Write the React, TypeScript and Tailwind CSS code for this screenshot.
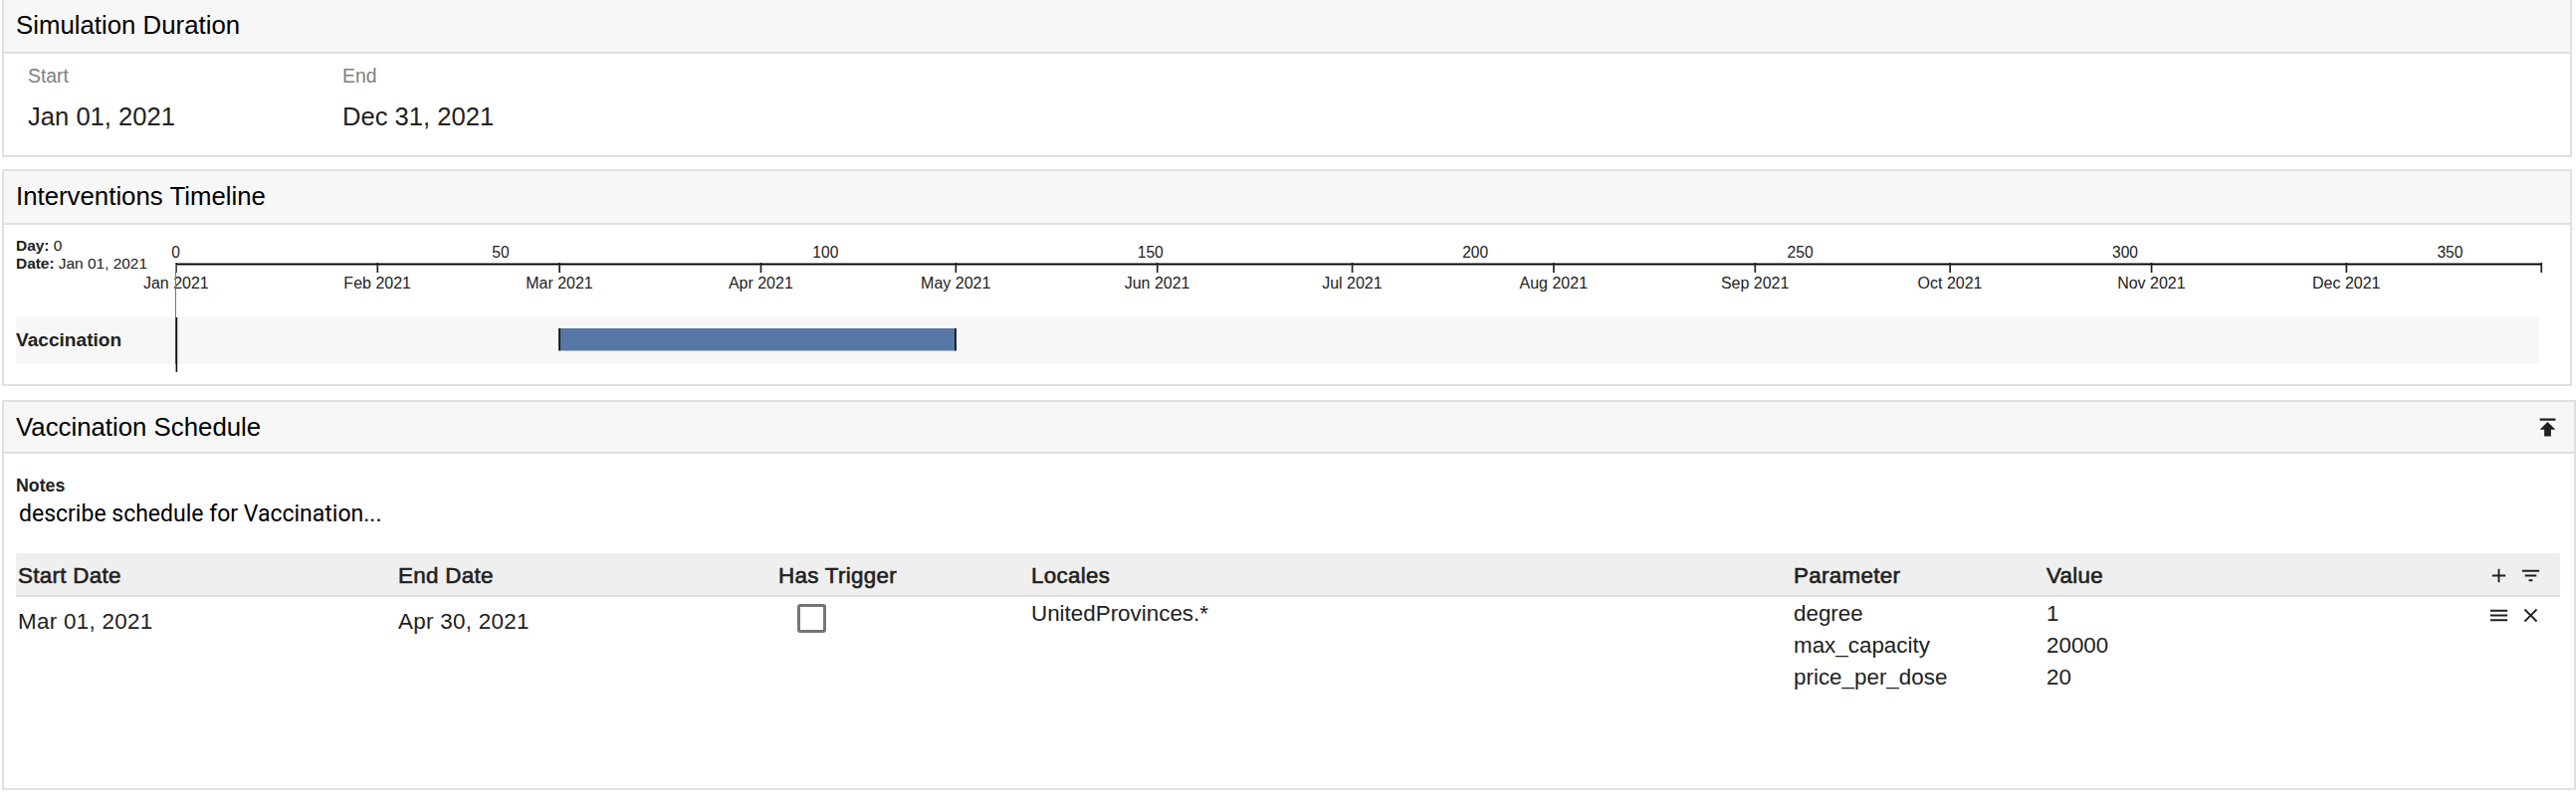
import React from "react";
import { MdAdd, MdClose, MdFilterList, MdMenu, MdPublish } from "react-icons/md";

const DAY = 6.5283;
const ORIGIN = 16.8;

const months = [
  { day: 0, label: "Jan 2021" },
  { day: 31, label: "Feb 2021" },
  { day: 59, label: "Mar 2021" },
  { day: 90, label: "Apr 2021" },
  { day: 120, label: "May 2021" },
  { day: 151, label: "Jun 2021" },
  { day: 181, label: "Jul 2021" },
  { day: 212, label: "Aug 2021" },
  { day: 243, label: "Sep 2021" },
  { day: 273, label: "Oct 2021" },
  { day: 304, label: "Nov 2021" },
  { day: 334, label: "Dec 2021" },
];
const days = [0, 50, 100, 150, 200, 250, 300, 350];
const params = [
  { name: "degree", value: "1" },
  { name: "max_capacity", value: "20000" },
  { name: "price_per_dose", value: "20" },
];
const columns = ["Start Date", "End Date", "Has Trigger", "Locales", "Parameter", "Value"];

const xOf = (day: number) => ORIGIN + day * DAY;

function Header({ title, children }: { title: string; children?: React.ReactNode }) {
  return (
    <header className="flex h-full items-center justify-between border-b-2 border-[#e0e0e0] bg-[#f7f7f7] pl-3 text-[25.8px] leading-[32px] text-black">
      {title && <h2 className={children ? "" : "pb-[2px]"}>{title}</h2>}
      {children}
    </header>
  );
}

function DateField({ label, value }: { label: string; value: string }) {
  return (
    <div className="w-[316px]">
      <div className="text-[19.4px] leading-6 text-[#808080]">{label}</div>
      <div className="mt-[13px] text-[25.6px] leading-8">{value}</div>
    </div>
  );
}

function Axis() {
  return (
    <svg width="2418" height="92" className="overflow-visible" fill="#222">
      <g fontSize="15.6" textAnchor="middle">
        {days.map((d) => (
          <text key={d} x={xOf(d) - 0.3} y="33.3">{d}</text>
        ))}
      </g>
      <g fontSize="16" textAnchor="middle">
        {months.map((m) => (
          <text key={m.day} x={xOf(m.day)} y="64">{m.label}</text>
        ))}
      </g>
      <g shapeRendering="crispEdges">
        <rect x="17" y="38" width="2377" height="3" fill="#8c8c8c" />
        <rect x="17" y="39" width="2377" height="1" fill="#000" />
      </g>
      {months.map((m) => (
        <rect key={m.day} x={xOf(m.day) - 0.7} y="38" width="1.7" height="10" />
      ))}
      <rect x={xOf(364) - 0.7} y="38" width="1.7" height="10" />
      <rect x="16" y="38" width="1" height="102" fill="#777" />
    </svg>
  );
}

export default function App() {
  return (
    <div className="flex h-[796px] w-[2588px] flex-col bg-white pl-[2px] font-['Liberation_Sans',Arial,sans-serif] text-[#212121]">
      <section className="grid h-[158px] w-[2582px] grid-rows-[54px_1fr] border-x-2 border-b-2 border-[#e0e0e0]">
        <Header title="Simulation Duration" />
        <div className="flex pl-6 pt-[10px]">
          <DateField label="Start" value="Jan 01, 2021" />
          <DateField label="End" value="Dec 31, 2021" />
        </div>
      </section>

      <section className="mt-3 grid h-[218px] w-[2582px] grid-rows-[54px_1fr] border-2 border-[#e0e0e0]">
        <Header title="Interventions Timeline" />
        <div className="pl-3">
          <div className="flex h-[92px]">
            <div className="w-36 whitespace-nowrap pt-3 text-[15.5px] leading-[18px] tracking-[-0.04px]">
              <div><b>Day:</b> 0</div>
              <div><b>Date:</b> Jan 01, 2021</div>
            </div>
            <Axis />
          </div>
          <div className="flex h-12 w-[2535px] items-center bg-[#f7f7f7]">
            <div className="w-36 text-[19.1px] font-bold">Vaccination</div>
            <svg width="2391" height="48" className="overflow-visible">
              <rect x="16" y="0" width="1" height="48" fill="#777" />
              <rect x="16.6" y="1" width="1.6" height="55" fill="#111" />
              <rect x="402" y="12" width="398" height="22.5" fill="#5778a4" />
              <rect x="401.2" y="12" width="1.6" height="22.5" />
              <rect x="799.2" y="12" width="1.6" height="22.5" />
            </svg>
          </div>
        </div>
      </section>

      <section className="mt-[14px] grid h-[392px] w-[2586px] grid-rows-[52px_1fr] border-2 border-[#e0e0e0]">
        <Header title="Vaccination Schedule">
          <MdPublish className="mr-[13px] size-[27px] text-[#212121]" />
        </Header>
        <div className="pl-3 pr-[14px] pt-[22px]">
          <div className="text-[17.8px] font-bold leading-5">Notes</div>
          <div className="ml-[3px] mt-[5px] font-[Roboto,sans-serif] text-[23px] leading-7 text-black">
            describe schedule for Vaccination...
          </div>
          <div className="mt-[25px] grid h-11 grid-cols-[382px_382px_254px_766px_254px_443px_32px_1fr] items-center border-b-2 border-[#e0e0e0] bg-[#efefef] pl-[2px] text-[22.4px] tracking-[0.3px]">
            {columns.map((c) => (
              <div key={c} className="pt-[3px] [-webkit-text-stroke:0.6px_#212121]">{c}</div>
            ))}
            <MdAdd className="mt-[2px] size-[23px]" />
            <MdFilterList className="mt-[2px] size-[23px]" />
          </div>
          <div className="grid grid-cols-[382px_382px_254px_766px_254px_443px_32px_1fr] items-start pl-[2px] text-[22.4px] leading-8">
            <div className="pt-[9px] tracking-[0.3px]">Mar 01, 2021</div>
            <div className="pt-[9px] tracking-[0.3px]">Apr 30, 2021</div>
            <div className="ml-[18.5px] mt-[7px] size-[29px] rounded-[3px] border-[3px] border-[#757575]" />
            <div className="pt-px">UnitedProvinces.*</div>
            <div className="pt-px">{params.map((p) => <div key={p.name}>{p.name}</div>)}</div>
            <div className="pt-px">{params.map((p) => <div key={p.name}>{p.value}</div>)}</div>
            <MdMenu className="mt-[7px] size-[23px]" />
            <MdClose className="mt-[7px] size-[23px]" />
          </div>
        </div>
      </section>
    </div>
  );
}
